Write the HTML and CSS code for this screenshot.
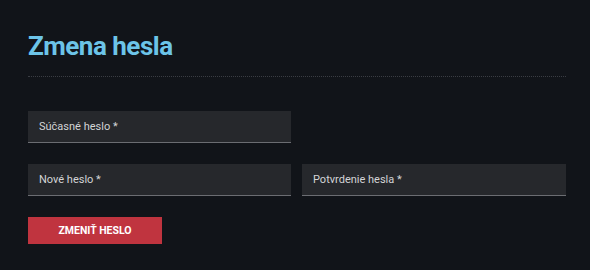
FILE: index.html
```html
<!DOCTYPE html>
<html lang="sk">
<head>
<meta charset="utf-8">
<title>Zmena hesla</title>
<link rel="stylesheet" href="styles.css">
</head>
<body>
<main class="page">
  <h1 class="title">Zmena hesla</h1>
  <hr class="divider">
  <form class="form">
    <div class="row">
      <input class="field" type="password" placeholder="Súčasné heslo *">
      <span></span>
    </div>
    <div class="row">
      <input class="field" type="password" placeholder="Nové heslo *">
      <input class="field" type="password" placeholder="Potvrdenie hesla *">
    </div>
    <div class="actions">
      <button class="btn" type="button">Zmeniť heslo</button>
    </div>
  </form>
</main>
</body>
</html>
```

FILE: styles.css
```css
html, body {
  margin: 0;
  padding: 0;
  background: #111419;
}
body {
  font-family: Roboto, "Noto Sans", sans-serif;
  color: #d6d7d9;
}
.page {
  width: 538px;
  padding: 29px 0 0 28px;
}
.title {
  margin: 0;
  font-size: 26px;
  line-height: 34px;
  font-weight: 700;
  color: #6cc4e8;
  letter-spacing: -0.5px;
}
.divider {
  margin: 13px 0 0 0;
  border: 0;
  border-top: 1px dotted #3a3d43;
  height: 0;
}
.form {
  display: flex;
  flex-direction: column;
  gap: 21px;
  margin-top: 34px;
}
.row {
  display: grid;
  grid-template-columns: 263px 264px;
  column-gap: 11px;
}
.field {
  box-sizing: border-box;
  height: 32px;
  margin: 0;
  padding: 0 11px;
  border: 0;
  border-bottom: 1px solid #6b6d72;
  background: #26282c;
  font-family: inherit;
  font-size: 11px;
  color: #d6d7d9;
  outline: none;
}
.field::placeholder {
  color: #d3d4d6;
  opacity: 1;
}
.actions {
  display: flex;
}
.btn {
  width: 134px;
  height: 27px;
  border: 0;
  background: #c0343f;
  color: #ffffff;
  font-family: inherit;
  font-size: 10.5px;
  font-weight: 700;
  text-transform: uppercase;
  padding: 0;
  cursor: pointer;
}
```
